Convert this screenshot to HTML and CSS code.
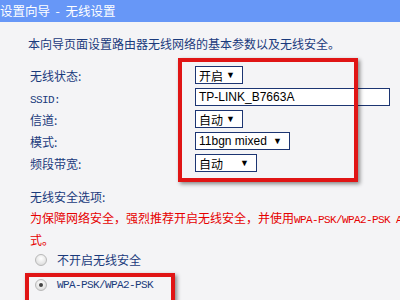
FILE: index.html
```html
<!DOCTYPE html>
<html lang="zh-CN">
<head>
<meta charset="utf-8">
<link rel="stylesheet" href="styles.css">
</head>
<body>
<div class="page">
  <div class="header">设置向导&nbsp;&nbsp;-&nbsp;&nbsp;无线设置</div>
  <p class="intro">本向导页面设置路由器无线网络的基本参数以及无线安全。</p>
  <div class="form">
    <div class="row">
      <span class="label">无线状态:</span>
      <span class="select w48"><span>开启</span><span class="arrow">▼</span></span>
    </div>
    <div class="row">
      <span class="label"><span class="mono">SSID:</span></span>
      <span class="input">TP-LINK_B7663A</span>
    </div>
    <div class="row">
      <span class="label">信道:</span>
      <span class="select w48"><span>自动</span><span class="arrow">▼</span></span>
    </div>
    <div class="row">
      <span class="label">模式:</span>
      <span class="select w95"><span>11bgn mixed</span><span class="arrow">▼</span></span>
    </div>
    <div class="row">
      <span class="label">频段带宽:</span>
      <span class="select w62"><span>自动</span><span class="arrow">▼</span></span>
    </div>
  </div>
  <div class="security">
    <div class="sec-title">无线安全选项:</div>
    <div class="warn">为保障网络安全，强烈推荐开启无线安全，并使用<span class="mono">WPA-PSK/WPA2-PSK A</span><br>式。</div>
    <div class="radios">
      <div class="radio-row"><span class="radio"></span><span>不开启无线安全</span></div>
      <div class="radio-row"><span class="radio checked"></span><span class="mono">WPA-PSK/WPA2-PSK</span></div>
    </div>
  </div>
  <div class="mark mark-form"></div>
  <div class="mark mark-wpa"></div>
</div>
</body>
</html>
```
FILE: styles.css
```css
html, body {
  margin: 0;
  padding: 0;
  overflow: hidden;
}
body {
  width: 400px;
  height: 300px;
  background: #f4f4f6;
  font-family: "Noto Sans CJK SC", "Liberation Sans", sans-serif;
  font-size: 12px;
  color: #1a3a7c;
}
.page {
  position: relative;
  width: 400px;
  height: 300px;
  overflow: hidden;
}
.header {
  height: 22px;
  line-height: 22px;
  background: #6797f7;
  color: #ffffff;
  font-size: 12.5px;
  white-space: nowrap;
}
.intro {
  margin: 14px 0 0 28px;
  line-height: 16px;
  white-space: nowrap;
}
.form {
  margin-top: 12px;
  display: flex;
  flex-direction: column;
}
.row {
  height: 22px;
  display: flex;
  align-items: center;
}
.label {
  width: 195px;
  padding-left: 30px;
  box-sizing: border-box;
  flex: none;
}
.mono {
  font-family: "Liberation Mono", monospace;
  font-size: 11px;
  letter-spacing: -0.6px;
}
.select {
  height: 18px;
  box-sizing: border-box;
  border: 1px solid #1c3572;
  background: #ffffff;
  color: #000000;
  display: flex;
  align-items: center;
  justify-content: space-between;
  padding: 0 7px 0 3px;
  font-family: "Liberation Sans", "Noto Sans CJK SC", sans-serif;
  font-size: 12px;
}
.w48 { width: 48px; }
.w95 { width: 95px; }
.w62 { width: 62px; }
.arrow {
  font-size: 9px;
  line-height: 1;
}
.input {
  width: 195px;
  height: 18px;
  box-sizing: border-box;
  border: 1px solid #1c3572;
  background: #ffffff;
  color: #000000;
  padding: 0 3px;
  display: flex;
  align-items: center;
  font-family: "Liberation Sans", sans-serif;
  font-size: 12px;
}
.security {
  margin-top: 12px;
  padding-left: 30px;
}
.sec-title {
  line-height: 22px;
}
.warn {
  color: #e60000;
  line-height: 20px;
  white-space: nowrap;
}
.radios {
  margin-top: -3px;
}
.radio-row {
  height: 25px;
  display: flex;
  align-items: center;
  padding-left: 5px;
  gap: 10px;
}
.radio {
  width: 12px;
  height: 12px;
  border-radius: 50%;
  box-sizing: border-box;
  border: 1px solid #b8b8b8;
  background: radial-gradient(circle at 50% 35%, #ffffff 0%, #e6e6e6 60%, #cfcfcf 100%);
  position: relative;
  flex: none;
}
.radio.checked::after {
  content: "";
  position: absolute;
  left: 3px;
  top: 3px;
  width: 4px;
  height: 4px;
  border-radius: 50%;
  background: #444;
}
.mark {
  position: absolute;
  border: 4px solid #e01515;
  box-shadow: 2px 2px 4px rgba(0, 0, 0, 0.45);
}
.mark-form {
  left: 178px;
  top: 58px;
  width: 172px;
  height: 116px;
}
.mark-wpa {
  left: 25px;
  top: 273px;
  width: 142px;
  height: 40px;
}
```
